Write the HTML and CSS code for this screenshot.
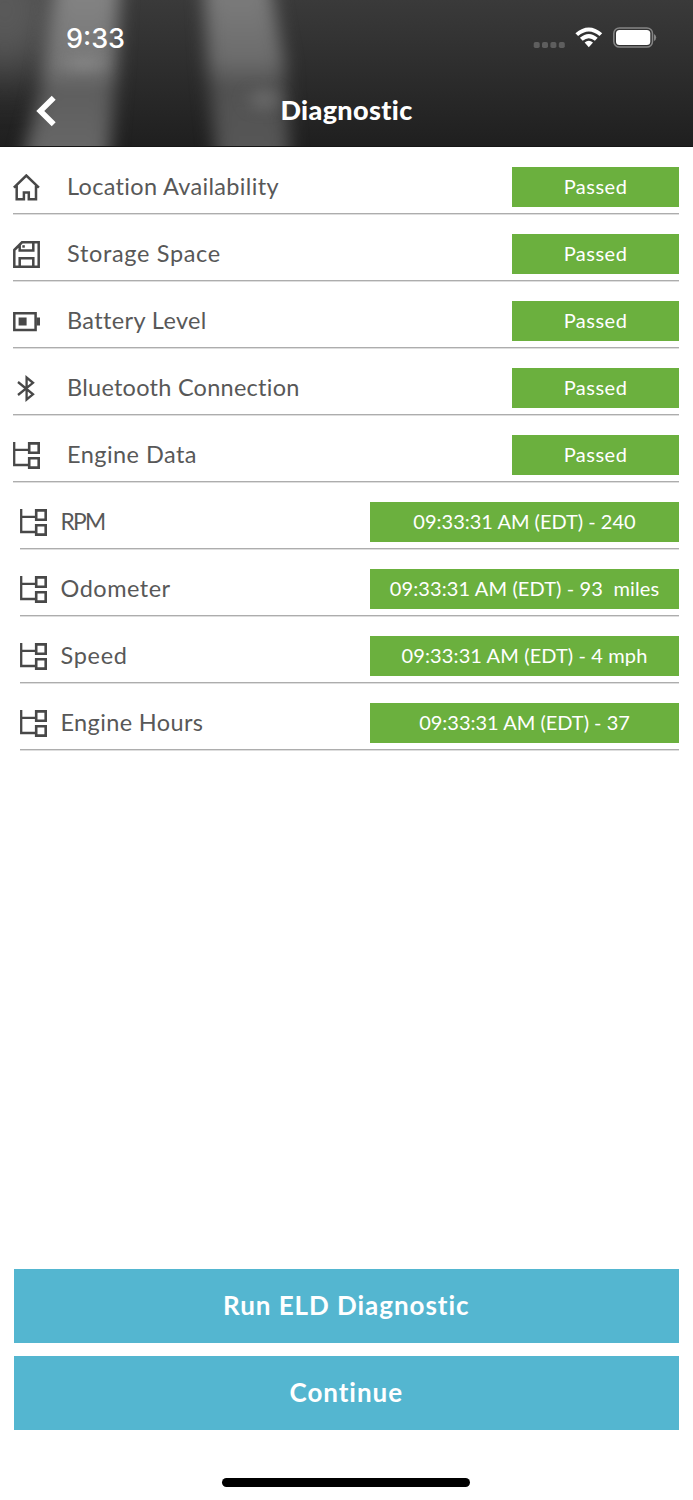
FILE: index.html
```
<!DOCTYPE html>
<html lang="en">
<head>
<meta charset="utf-8">
<title>Diagnostic</title>
<link rel="stylesheet" href="styles.css">
</head>
<body>
<svg class="symbols" width="0" height="0" aria-hidden="true">
  <symbol id="tree" viewBox="0 0 27 27">
    <path d="M1.2 0V23H15M1.2 7.8H15" fill="none" stroke="#484848" stroke-width="2.3"/>
    <path d="M16.2 1.4H25.7V10.8H16.2ZM16.2 16.2H25.7V25.6H16.2Z" fill="none" stroke="#484848" stroke-width="2.6"/>
  </symbol>
</svg>
<div class="screen">
  <header class="header">
    <svg class="backdrop" viewBox="0 0 693 147" preserveAspectRatio="none" aria-hidden="true">
      <defs>
        <linearGradient id="base" x1="0" y1="0" x2="0" y2="1">
          <stop offset="0" stop-color="#3a3a3a"/><stop offset="1" stop-color="#1f1f1f"/>
        </linearGradient>
        <linearGradient id="beam" gradientUnits="userSpaceOnUse" x1="0" y1="0" x2="0" y2="147">
          <stop offset="0" stop-color="#828282"/><stop offset=".45" stop-color="#767676"/><stop offset=".62" stop-color="#5e5e5e"/><stop offset="1" stop-color="#666"/>
        </linearGradient>
        <linearGradient id="beam2" gradientUnits="userSpaceOnUse" x1="0" y1="0" x2="0" y2="147">
          <stop offset="0" stop-color="#7a7a7a"/><stop offset=".4" stop-color="#6c6c6c"/><stop offset=".6" stop-color="#525252"/><stop offset="1" stop-color="#565656"/>
        </linearGradient>
        <filter id="soft" filterUnits="userSpaceOnUse" x="-100" y="-100" width="893" height="347" color-interpolation-filters="sRGB"><feGaussianBlur stdDeviation="9 6"/></filter>
        <filter id="wide" filterUnits="userSpaceOnUse" x="-100" y="-100" width="893" height="347" color-interpolation-filters="sRGB"><feGaussianBlur stdDeviation="24"/></filter>
      </defs>
      <rect width="693" height="147" fill="url(#base)"/>
      <ellipse cx="5" cy="10" rx="55" ry="65" fill="#5a5a5a" filter="url(#wide)"/>
      <path d="M60 -50H122L116 70L106 197H14L40 90Z" fill="url(#beam)" filter="url(#soft)"/>
      <path d="M202 -50H264L284 60L292 197H220L208 70Z" fill="url(#beam2)" filter="url(#soft)"/>
      <ellipse cx="84" cy="63" rx="17" ry="7" fill="#848484" filter="url(#soft)"/>
      <ellipse cx="264" cy="100" rx="12" ry="12" fill="#686868" filter="url(#soft)"/>
    </svg>
    <div class="status">
      <span class="time">9:33</span>
      <svg class="indicators" width="124" height="24" viewBox="0 0 124 24" aria-hidden="true">
        <g fill="#5e5e5e"><rect x=".7" y="16" width="6" height="6" rx="1.8"/><rect x="9" y="16" width="6" height="6" rx="1.8"/><rect x="17.4" y="16" width="6" height="6" rx="1.8"/><rect x="25.8" y="16" width="6" height="6" rx="1.8"/></g>
        <g fill="#fff"><path d="M42.4 7.2Q55.8-4.2 69.2 7.2L66.5 10.1Q55.8.9 45.1 10.1z"/><path d="M46.9 11.8Q55.8 4.2 64.7 11.8L61.9 14.7Q55.8 9.7 49.7 14.7z"/><path d="M51.6 16.6Q55.8 13 60 16.6L55.8 21.2z"/></g>
        <rect x="80.8" y="1.9" width="38.7" height="19.2" rx="5.6" fill="none" stroke="#858585" stroke-width="1.5"/>
        <rect x="83" y="4" width="34.3" height="15" rx="3.5" fill="#fff"/>
        <path d="M121 8q2.2 1.3 2.2 3.6T121 15z" fill="#858585"/>
      </svg>
    </div>
    <div class="nav">
      <svg class="back" width="20" height="32" viewBox="0 0 20 32" aria-hidden="true"><path d="M17.7 2.8L4.3 16L17.7 29.2" fill="none" stroke="#fff" stroke-width="5.6"/></svg>
      <h1 class="title">Diagnostic</h1>
    </div>
  </header>
  <main class="checks">
    <div class="row">
      <svg class="icon" viewBox="0 0 27 27"><path d="M.9 13.7L13.3 1.5L25.9 13.7M3.7 11.8V25.3H10.9V18.4H15.8V25.3H23V11.8" fill="none" stroke="#484848" stroke-width="2.5"/></svg>
      <span class="label"><span class="location">Location Availability</span></span><span class="badge">Passed</span>
    </div>
    <div class="row">
      <svg class="icon" viewBox="0 0 27 27"><path d="M1.3 9L9 1.3H25.7V25.7H1.3ZM6.7 4V9.4H20.3V1.3M6.7 25V17.3H20.3V25" fill="none" stroke="#484848" stroke-width="2.5"/><path d="M9.3 4.2h2.5v2.5H9.3z" fill="#484848"/></svg>
      <span class="label"><span class="storage">Storage Space</span></span><span class="badge">Passed</span>
    </div>
    <div class="row">
      <svg class="icon" viewBox="0 0 27 27"><path d="M1.3 5.3H22.6V21.9H1.3Z" fill="none" stroke="#484848" stroke-width="2.5"/><path d="M5.6 9.5h8v8h-8zM23.5 9.5h3.5v8h-3.5z" fill="#484848"/></svg>
      <span class="label"><span>Battery Level</span></span><span class="badge">Passed</span>
    </div>
    <div class="row">
      <svg class="icon" viewBox="0 0 27 27"><path d="M5 7L20 19.3L13.6 24.5V2.5L20 7.8L5 20" fill="none" stroke="#484848" stroke-width="2.3"/></svg>
      <span class="label"><span class="bluetooth">Bluetooth Connection</span></span><span class="badge">Passed</span>
    </div>
    <div class="row">
      <svg class="icon"><use href="#tree"/></svg>
      <span class="label"><span class="engine">Engine Data</span></span><span class="badge">Passed</span>
    </div>
    <div class="row sub">
      <svg class="icon"><use href="#tree"/></svg>
      <span class="label"><span class="rpm">RPM</span></span><span class="badge">09:33:31 AM (EDT) - 240</span>
    </div>
    <div class="row sub">
      <svg class="icon"><use href="#tree"/></svg>
      <span class="label"><span class="odometer">Odometer</span></span><span class="badge loose">09:33:31 AM (EDT) - 93&nbsp; miles</span>
    </div>
    <div class="row sub">
      <svg class="icon"><use href="#tree"/></svg>
      <span class="label"><span class="speed">Speed</span></span><span class="badge loose">09:33:31 AM (EDT) - 4 mph</span>
    </div>
    <div class="row sub">
      <svg class="icon"><use href="#tree"/></svg>
      <span class="label"><span>Engine Hours</span></span><span class="badge">09:33:31 AM (EDT) - 37</span>
    </div>
  </main>
  <footer class="actions">
    <button class="action">Run ELD Diagnostic</button>
    <button class="action">Continue</button>
    <div class="home"></div>
  </footer>
</div>
</body>
</html>
```
FILE: styles.css
```
* { box-sizing: border-box; }
body { margin: 0; background: #fff; font-family: Lato, "Liberation Sans", sans-serif; font-variant-ligatures: none; }
.symbols { display: block; }
.screen { width: 693px; height: 1500px; display: flex; flex-direction: column; }
.header { position: relative; height: 147px; background: #2b2b2b; border-bottom: 1px solid #161616; }
.backdrop { position: absolute; inset: 0; width: 100%; height: 100%; }
.status { position: relative; display: flex; justify-content: space-between; align-items: center; height: 74px; padding: 2px 36px 0 66px; }
.time { padding-top: 2px; font: 500 27px/32px Inter, sans-serif; color: #fff; }
.indicators { display: block; }
.nav { position: relative; display: grid; grid-template-columns: 80px 1fr 80px; align-items: center; height: 73px; }
.back { margin-left: 36px; }
.title { margin: 0; padding-bottom: 2px; text-align: center; color: #fff; font-size: 27px; line-height: 32px; font-weight: 900; letter-spacing: .35px; }
.checks { flex: 1; padding: 0 14px 0 13px; }
.row { display: flex; align-items: center; height: 67px; padding: 20px 0 6px; border-bottom: 1px solid #adadad; box-shadow: 0 1px #dedede; }
.row.sub { margin-left: 7px; }
.icon { width: 27px; height: 27px; flex: none; }
.label { flex: 1; padding: 0 0 3px 27px; font-size: 23.5px; line-height: 32px; color: #585858; letter-spacing: .37px; white-space: nowrap; }
.sub .label { padding-left: 13.5px; }
.location { letter-spacing: .33px; }
.storage { letter-spacing: .67px; }
.bluetooth { letter-spacing: .26px; }
.engine { letter-spacing: .45px; }
.rpm { font-size: 22.8px; letter-spacing: -1.7px; }
.odometer { letter-spacing: .5px; }
.speed { letter-spacing: .7px; }
.badge { width: 167px; height: 40px; background: #6bb03e; color: #fff; font-size: 20px; line-height: 39px; text-align: center; letter-spacing: .5px; white-space: nowrap; }
.sub .badge { width: 309px; letter-spacing: 0; }
.sub .badge.loose { letter-spacing: .11px; }
.actions { display: flex; flex-direction: column; gap: 13px; height: 231px; padding: 0 14px 0 13.5px; }
.action { flex: none; height: 74px; padding: 0 0 3px; border: 0; background: #54b6d0; color: #fff; font: 700 26px/32px Lato, sans-serif; letter-spacing: .95px; }
.home { width: 248px; height: 9px; margin: 35px auto 0; border-radius: 5px; background: #000; }
```
